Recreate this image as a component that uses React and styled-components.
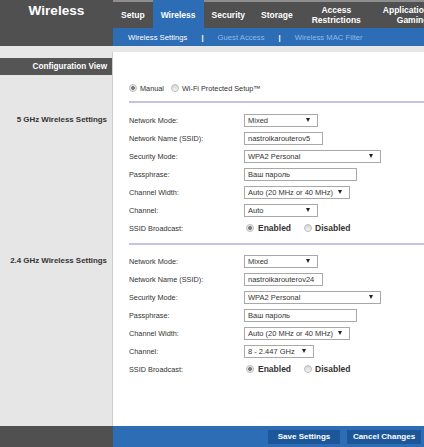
import React from 'react';
import styled, { createGlobalStyle } from 'styled-components';

const GlobalStyle = createGlobalStyle`
  html, body {
    margin: 0;
    padding: 0;
  }
  body {
    width: 424px;
    height: 447px;
    overflow: hidden;
    background: #fff;
    font-family: "Liberation Sans", Arial, sans-serif;
  }
`;

const BLUE = '#2c6db6';
const DARK = '#505050';
const LIGHT = '#e6e6e6';

const Page = styled.div`
  width: 424px;
  height: 447px;
  display: flex;
  flex-direction: column;
  overflow: hidden;
`;

const Header = styled.header`
  display: grid;
  grid-template-columns: 113px 1fr;
  height: 46px;
  background: ${DARK};
  flex-shrink: 0;
`;

const Title = styled.div`
  color: #fff;
  font-weight: bold;
  font-size: 13.6px;
  line-height: 22px;
  text-align: center;
`;

const Nav = styled.nav`
  display: flex;
  flex-direction: column;
  min-width: 0;
  overflow: hidden;
`;

const Tabs = styled.div`
  display: flex;
  height: 28px;
  white-space: nowrap;
`;

const Tab = styled.div`
  flex-shrink: 0;
  box-sizing: border-box;
  height: 28px;
  display: flex;
  align-items: center;
  justify-content: center;
  text-align: center;
  padding: 0 ${({ $wide }) => ($wide ? '11px' : '8px')};
  border-top: 2px solid ${({ $active }) => ($active ? BLUE : '#8e8e8e')};
  background: ${({ $active }) => ($active ? BLUE : 'transparent')};
  color: #fff;
  font-weight: bold;
  font-size: 8.5px;
  line-height: 10px;
`;

const SubNav = styled.div`
  display: flex;
  align-items: center;
  height: 18px;
  padding-left: 15px;
  background: ${BLUE};
  font-size: 7.7px;
  white-space: nowrap;
`;

const SubLink = styled.span`
  color: ${({ $active }) => ($active ? '#fff' : '#8fbaee')};
`;

const SubSep = styled.span`
  color: #fff;
  font-weight: bold;
  margin: 0 14px;
`;

const Band = styled.div`
  height: 6px;
  background: ${LIGHT};
  flex-shrink: 0;
`;

const Body = styled.div`
  flex: 1;
  display: grid;
  grid-template-columns: 113px 1fr;
  grid-template-rows: auto auto auto 1fr;
`;

const Side = styled.div`
  background: ${LIGHT};
  border-right: 1px solid #cdcdcd;
  box-sizing: border-box;
  padding-top: ${({ $top }) => $top || 0}px;
`;

const ConfigBar = styled.div`
  margin-top: 6px;
  height: 17px;
  line-height: 17px;
  background: #555;
  color: #fff;
  font-weight: bold;
  font-size: 8.2px;
  text-align: right;
  padding-right: 5px;
`;

const SideLabel = styled.div`
  line-height: 18px;
  font-weight: bold;
  font-size: 7.9px;
  color: #333;
  text-align: right;
  padding-right: 5px;
`;

const Main = styled.div`
  padding-left: 16px;
  background: #fff;
`;

const Section = styled.div`
  padding: ${({ $pad }) => $pad};
  border-bottom: ${({ $line }) => ($line ? '2px solid #c9c2e6' : 'none')};
`;

const ModeRow = styled.div`
  display: flex;
  align-items: center;
  height: 14px;
  font-size: 7.3px;
  color: #333;
`;

const Row = styled.div`
  display: grid;
  grid-template-columns: 115px auto;
  align-items: center;
  height: 18px;
`;

const Label = styled.span`
  font-size: 7.3px;
  color: #333;
`;

const Box = styled.div`
  box-sizing: border-box;
  width: ${({ $w }) => $w}px;
  height: 13px;
  border: 1px solid #a8a8a8;
  background: #fff;
  display: flex;
  align-items: center;
  justify-content: space-between;
  padding: 0 7px 0 3px;
  font-size: 7.5px;
  color: #333;
  white-space: nowrap;
`;

const Arrow = styled.span`
  width: 0;
  height: 0;
  border-left: 2.5px solid transparent;
  border-right: 2.5px solid transparent;
  border-top: 4px solid #222;
`;

const Radio = styled.span`
  box-sizing: border-box;
  width: 8px;
  height: 8px;
  border-radius: 50%;
  border: 1px solid #bcbcbc;
  flex-shrink: 0;
  margin: ${({ $m }) => $m || '0'};
  background: ${({ $on }) =>
    $on
      ? 'radial-gradient(circle, #7d7d7d 0 1.6px, #e4e4e4 2.2px, #f7f7f7 100%)'
      : 'linear-gradient(#d4d4d4, #f6f6f6)'};
`;

const Choices = styled.div`
  display: flex;
  align-items: center;
  padding-left: 2px;
`;

const Choice = styled.span`
  font-weight: bold;
  font-size: 8.5px;
  color: #333;
`;

const Footer = styled.footer`
  display: grid;
  grid-template-columns: 113px 1fr;
  height: 21px;
  flex-shrink: 0;
`;

const FootSide = styled.div`
  background: ${DARK};
`;

const FootBar = styled.div`
  background: ${BLUE};
  display: flex;
  align-items: center;
  justify-content: flex-end;
  gap: 7px;
  padding-right: 3px;
`;

const Button = styled.button`
  width: ${({ $w }) => $w}px;
  height: 14px;
  padding: 0;
  border: none;
  background: #1d5799;
  color: #fff;
  font-family: inherit;
  font-weight: bold;
  font-size: 8px;
`;

const Select = ({ w, children }) => (
  <Box $w={w}>
    <span>{children}</span>
    <Arrow />
  </Box>
);

const Field = ({ w, children }) => <Box $w={w}>{children}</Box>;

const Band5 = ({ name, channel, channelW }) => (
  <>
    <Row>
      <Label>Network Mode:</Label>
      <Select w={74}>Mixed</Select>
    </Row>
    <Row>
      <Label>Network Name (SSID):</Label>
      <Field w={79}>{name}</Field>
    </Row>
    <Row>
      <Label>Security Mode:</Label>
      <Select w={137}>WPA2 Personal</Select>
    </Row>
    <Row>
      <Label>Passphrase:</Label>
      <Field w={113}>Ваш пароль</Field>
    </Row>
    <Row>
      <Label>Channel Width:</Label>
      <Select w={106}>Auto (20 MHz or 40 MHz)</Select>
    </Row>
    <Row>
      <Label>Channel:</Label>
      <Select w={channelW}>{channel}</Select>
    </Row>
    <Row>
      <Label>SSID Broadcast:</Label>
      <Choices>
        <Radio $on />
        <Choice style={{ marginLeft: 4 }}>Enabled</Choice>
        <Radio $m="0 0 0 13px" />
        <Choice style={{ marginLeft: 3 }}>Disabled</Choice>
      </Choices>
    </Row>
  </>
);

export default function App() {
  return (
    <Page>
      <GlobalStyle />
      <Header>
        <Title>Wireless</Title>
        <Nav>
          <Tabs>
            <Tab>Setup</Tab>
            <Tab $active>Wireless</Tab>
            <Tab>Security</Tab>
            <Tab>Storage</Tab>
            <Tab $wide>Access<br />Restrictions</Tab>
            <Tab $wide>Applications &amp;<br />Gaming</Tab>
          </Tabs>
          <SubNav>
            <SubLink $active>Wireless Settings</SubLink>
            <SubSep>|</SubSep>
            <SubLink>Guest Access</SubLink>
            <SubSep>|</SubSep>
            <SubLink>Wireless MAC Filter</SubLink>
          </SubNav>
        </Nav>
      </Header>
      <Band />
      <Body>
        <Side>
          <ConfigBar>Configuration View</ConfigBar>
        </Side>
        <Main>
          <Section $pad="29px 0 6px" $line>
            <ModeRow>
              <Radio $on />
              <span style={{ marginLeft: 3 }}>Manual</span>
              <Radio $m="0 0 0 7px" />
              <span style={{ marginLeft: 3 }}>Wi-Fi Protected Setup™</span>
            </ModeRow>
          </Section>
        </Main>

        <Side $top={8}>
          <SideLabel>5 GHz Wireless Settings</SideLabel>
        </Side>
        <Main>
          <Section $pad="8px 0 6px" $line>
            <Band5 name="nastroikarouterov5" channel="Auto" channelW={74} />
          </Section>
        </Main>

        <Side $top={7}>
          <SideLabel>2.4 GHz Wireless Settings</SideLabel>
        </Side>
        <Main>
          <Section $pad="7px 0 0">
            <Band5 name="nastroikarouterov24" channel="8 - 2.447 GHz" channelW={70} />
          </Section>
        </Main>

        <Side />
        <Main />
      </Body>
      <Footer>
        <FootSide />
        <FootBar>
          <Button $w={72}>Save Settings</Button>
          <Button $w={74}>Cancel Changes</Button>
        </FootBar>
      </Footer>
    </Page>
  );
}
